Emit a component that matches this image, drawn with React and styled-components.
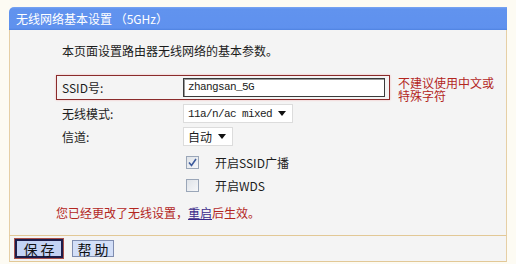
import React from "react";
import styled, { createGlobalStyle } from "styled-components";

const GlobalStyle = createGlobalStyle`
  html, body {
    margin: 0;
    padding: 0;
    background: #fdfbf3;
  }
  body {
    font-family: "Noto Sans CJK SC", "Liberation Sans", sans-serif;
    font-size: 12px;
    color: #1c1c1c;
  }
`;

const Page = styled.div`
  width: 516px;
  height: 264px;
  padding: 7px 0 0 9px;
  box-sizing: border-box;
  overflow: hidden;
`;

const Panel = styled.div`
  width: 498px;
`;

const Header = styled.div`
  height: 23px;
  line-height: 23px;
  padding-left: 7px;
  background: linear-gradient(#7aa6f2 0, #6193ee 2px, #5f91ee 21px, #4f82e0 23px);
  border-top-left-radius: 5px;
  color: #fff;
  font-size: 12px;
  white-space: pre;
`;

const Body = styled.div`
  background: #f4f4f4;
  border-left: 1px solid #e6cfa5;
  border-right: 1px solid #e6cfa5;
  padding: 12px 0 11px 46px;
`;

const Intro = styled.div`
  height: 18px;
  line-height: 18px;
  padding-left: 6px;
  margin-bottom: 15px;
`;

const SsidLine = styled.div`
  display: flex;
  align-items: flex-start;
`;

const SsidBox = styled.div`
  display: flex;
  align-items: center;
  width: 334px;
  height: 25px;
  box-sizing: border-box;
  padding-left: 5px;
  border: 1px solid #8a2b2b;
  box-shadow: 0 0 2px #f3b8b8;
`;

const Hint = styled.div`
  margin: 1px 0 0 8px;
  color: #b3261e;
  line-height: 13px;
  width: 100px;
`;

const Row = styled.div`
  display: flex;
  align-items: center;
  height: 23px;
  padding-left: 6px;
  margin-top: ${(p) => p.$gap || 0}px;
`;

const Label = styled.div`
  width: 121px;
  flex: none;
`;

const Mono = `
  font-family: "Liberation Mono", "DejaVu Sans Mono", monospace;
  font-size: 11px;
  letter-spacing: -0.6px;
`;

const TextInput = styled.div`
  width: 202px;
  height: 19px;
  box-sizing: border-box;
  background: #fff;
  border: 1px solid #3a3a3a;
  box-shadow: inset 1px 1px 0 #9a9a9a;
  padding-left: 4px;
  line-height: 17px;
  ${Mono}
`;

const Select = styled.div`
  width: ${(p) => p.$w}px;
  height: 19px;
  box-sizing: border-box;
  background: #fff;
  border: 1px solid #dcdcdc;
  display: flex;
  align-items: center;
  justify-content: space-between;
  padding: 0 6px 0 4px;
  ${(p) => (p.$mono ? Mono : "font-size: 12px;")}
`;

const Arrow = styled.span`
  width: 0;
  height: 0;
  border-left: 4px solid transparent;
  border-right: 4px solid transparent;
  border-top: 5px solid #111;
`;

const Check = styled.div`
  width: 13px;
  height: 13px;
  box-sizing: border-box;
  border: 1px solid #9aa6b8;
  background: linear-gradient(135deg, #dfe3e8, #f6f7f9);
  margin: 0 16px 0 3px;
  display: flex;
  align-items: center;
  justify-content: center;
`;

const Message = styled.div`
  height: 22px;
  line-height: 22px;
  margin-top: 5px;
  color: #b3261e;
  a {
    color: #3a2a8a;
    text-decoration: underline;
  }
`;

const Footer = styled.div`
  height: 25px;
  border-top: 1px solid #e2c896;
  border-bottom: 1px solid #e2c896;
  border-left: 1px solid #e6cfa5;
  border-right: 1px solid #e6cfa5;
  background: #f4f4f4;
  display: flex;
  align-items: center;
  gap: 9px;
  padding-left: 4px;
`;

const Button = styled.div`
  box-sizing: border-box;
  height: ${(p) => (p.$primary ? 19 : 17)}px;
  width: ${(p) => (p.$primary ? 48 : 42)}px;
  border: ${(p) => (p.$primary ? "2px solid #1c1c4a" : "1px solid #7f8db0")};
  outline: ${(p) => (p.$primary ? "1px solid #a8504a" : "none")};
  background: ${(p) => (p.$primary ? "#c3d2f4" : "#d3dff8")};
  display: flex;
  align-items: center;
  justify-content: center;
  font-size: 14px;
  color: #111;
  white-space: pre;
  margin-left: ${(p) => (p.$primary ? 1 : 0)}px;
`;

const CheckMark = () => (
  <svg width="9" height="9" viewBox="0 0 9 9">
    <path d="M1 4.5 L3.5 7.5 L8 1" fill="none" stroke="#3c5a9c" strokeWidth="1.6" />
  </svg>
);

export default function App() {
  return (
    <Page>
      <GlobalStyle />
      <Panel>
        <Header>无线网络基本设置 （5GHz）</Header>
        <Body>
          <Intro>本页面设置路由器无线网络的基本参数。</Intro>
          <SsidLine>
            <SsidBox>
              <Label>SSID号:</Label>
              <TextInput>zhangsan_5G</TextInput>
            </SsidBox>
            <Hint>
              不建议使用中文或
              <br />
              特殊字符
            </Hint>
          </SsidLine>
          <Row>
            <Label>无线模式:</Label>
            <Select $w={110} $mono>
              11a/n/ac mixed
              <Arrow />
            </Select>
          </Row>
          <Row>
            <Label>信道:</Label>
            <Select $w={50}>
              自动
              <Arrow />
            </Select>
          </Row>
          <Row $gap={3}>
            <Label />
            <Check>
              <CheckMark />
            </Check>
            开启SSID广播
          </Row>
          <Row>
            <Label />
            <Check />
            开启WDS
          </Row>
          <Message>
            您已经更改了无线设置，<a>重启</a>后生效。
          </Message>
        </Body>
        <Footer>
          <Button $primary>保 存</Button>
          <Button>帮 助</Button>
        </Footer>
      </Panel>
    </Page>
  );
}
